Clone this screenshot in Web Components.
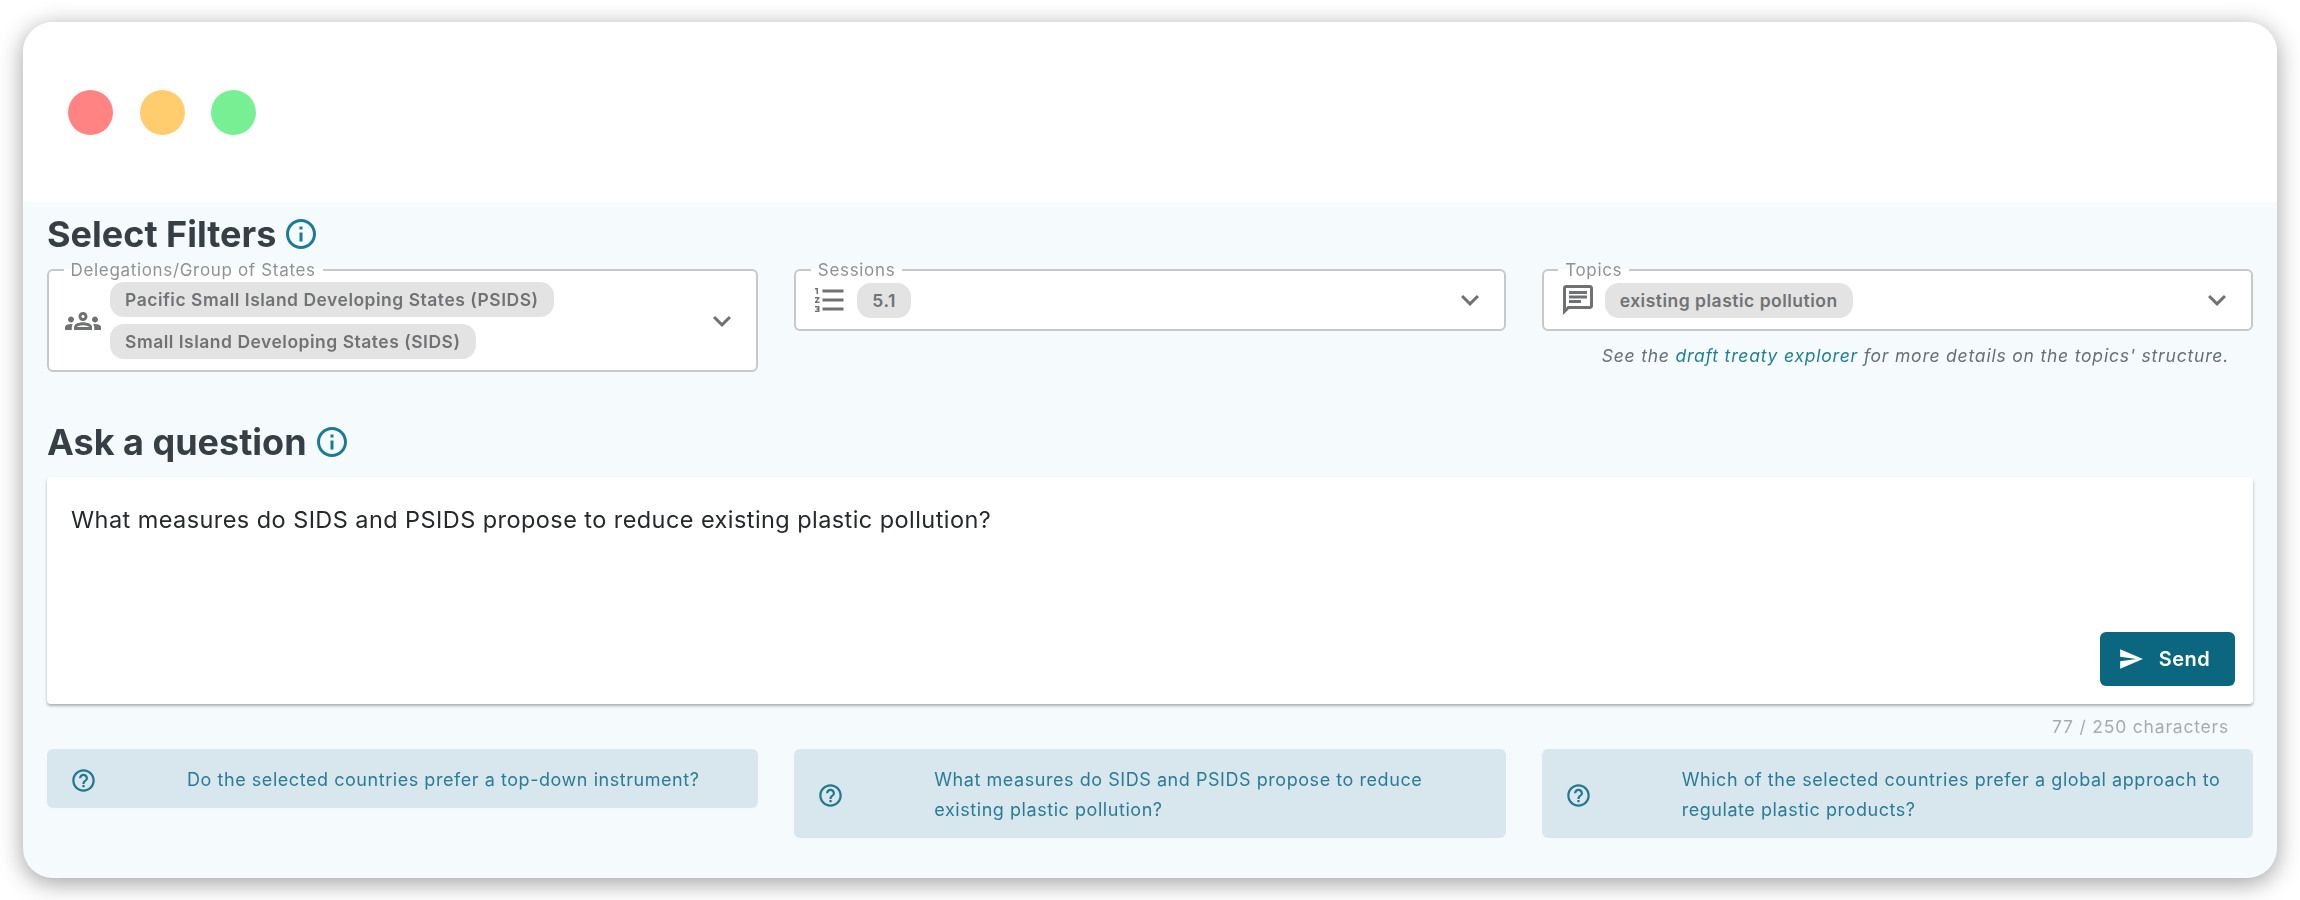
<!DOCTYPE html>
<html lang="en">
<head>
<meta charset="utf-8">
<title>Select Filters</title>
<style>
  html, body { margin: 0; background: #fff; }
  body { font-family: Inter, "Liberation Sans", sans-serif; padding: 22px 23px; box-sizing: border-box; height: 900px; overflow: hidden; }
</style>
</head>
<body>
<app-window>
  <section-title text="Select Filters"></section-title>
  <div slot="filters">
    <filter-select label="Delegations/Group of States" icon="groups">
      <filter-chip>Pacific Small Island Developing States (PSIDS)</filter-chip>
      <filter-chip>Small Island Developing States (SIDS)</filter-chip>
    </filter-select>
    <filter-select label="Sessions" icon="list">
      <filter-chip>5.1</filter-chip>
    </filter-select>
    <filter-select label="Topics" icon="chat" hint>
      <filter-chip>existing plastic pollution</filter-chip>
    </filter-select>
  </div>
  <section-title slot="ask" text="Ask a question" class="second"></section-title>
  <question-box slot="ask" count="77 / 250 characters">What measures do SIDS and PSIDS propose to reduce existing plastic pollution?</question-box>
  <div slot="suggestions">
    <suggestion-card>Do the selected countries prefer a top-down instrument?</suggestion-card>
    <suggestion-card>What measures do SIDS and PSIDS propose to reduce existing plastic pollution?</suggestion-card>
    <suggestion-card>Which of the selected countries prefer a global approach to regulate plastic products?</suggestion-card>
  </div>
</app-window>

<script>
// material icon paths, all on a 24 box
const ICONS = {
  info: 'M11 7h2v2h-2zm0 4h2v6h-2zm1-9C6.48 2 2 6.48 2 12s4.48 10 10 10 10-4.48 10-10S17.52 2 12 2zm0 18c-4.41 0-8-3.59-8-8s3.59-8 8-8 8 3.59 8 8-3.59 8-8 8z',
  help: 'M11 18h2v-2h-2v2zm1-16C6.48 2 2 6.48 2 12s4.48 10 10 10 10-4.48 10-10S17.52 2 12 2zm0 18c-4.41 0-8-3.59-8-8s3.59-8 8-8 8 3.59 8 8-3.59 8-8 8zm0-14c-2.21 0-4 1.79-4 4h2c0-1.1.9-2 2-2s2 .9 2 2c0 2-3 1.75-3 5h2c0-2.25 3-2.5 3-5 0-2.21-1.79-4-4-4z',
  chevron: 'M16.59 8.59L12 13.17 7.41 8.59 6 10l6 6 6-6z',
  send: 'M2.01 21L23 12 2.01 3 2 10l15 2-15 2z',
  list: 'M2 17h2v.5H3v1h1v.5H2v1h3v-4H2v1zm1-9h1V4H2v1h1v3zm-1 3h1.8L2 13.1v.9h3v-1H3.2L5 10.9V10H2v1zm5-6v2h14V5H7zm0 14h14v-2H7v2zm0-6h14v-2H7v2z',
  chat: 'M4 4h16v12H5.17L4 17.17V4m0-2c-1.1 0-1.99.9-1.99 2L2 22l4-4h14c1.1 0 2-.9 2-2V4c0-1.1-.9-2-2-2H4zm2 10h8v2H6v-2zm0-3h12v2H6V9zm0-3h12v2H6V6z',
  groups: 'M4,13c1.1,0,2-0.9,2-2c0-1.1-0.9-2-2-2s-2,0.9-2,2C2,12.1,2.9,13,4,13z M5.13,14.1C4.76,14.04,4.39,14,4,14c-0.99,0-1.93,0.21-2.78,0.58C0.48,14.9,0,15.62,0,16.43V18l4.5,0v-1.61C4.5,15.56,4.73,14.78,5.13,14.1z M20,13c1.1,0,2-0.9,2-2c0-1.1-0.9-2-2-2s-2,0.9-2,2C18,12.1,18.9,13,20,13z M24,16.43c0-0.81-0.48-1.53-1.22-1.85C21.93,14.21,20.99,14,20,14c-0.39,0-0.76,0.04-1.13,0.1c0.4,0.68,0.63,1.46,0.63,2.29V18l4.5,0V16.43z M16.24,13.65c-1.17-0.52-2.61-0.9-4.24-0.9c-1.63,0-3.07,0.39-4.24,0.9C6.68,14.13,6,15.21,6,16.39V18h12v-1.61C18,15.21,17.32,14.13,16.24,13.65z M8.07,16c0.09-0.23,0.13-0.39,0.91-0.69c0.97-0.38,1.99-0.56,3.02-0.56s2.05,0.18,3.02,0.56c0.77,0.3,0.81,0.46,0.91,0.69H8.07z M12,8c0.55,0,1,0.45,1,1s-0.45,1-1,1s-1-0.45-1-1S11.45,8,12,8 M12,6c-1.66,0-3,1.34-3,3c0,1.66,1.34,3,3,3s3-1.34,3-3C15,7.34,13.66,6,12,6L12,6z'
};

function icon(name, size, color) {
  return `<svg width="${size}" height="${size}" viewBox="0 0 24 24" fill="${color}" style="flex:none;display:block" aria-hidden="true"><path d="${ICONS[name]}"/></svg>`;
}

class AppWindow extends HTMLElement {
  constructor() {
    super();
    this.attachShadow({ mode: 'open' });
    this.shadowRoot.innerHTML = `
      <style>
        :host {
          display: block;
          width: 2254px;
          height: 856px;
          border-radius: 30px;
          background: #f5fafd;
          box-shadow: 0 5px 24px rgba(0, 0, 0, 0.38);
        }
        .frame { height: 100%; border-radius: inherit; overflow: hidden; }
        .bar {
          height: 180px;
          background: #fff;
          display: flex;
          align-items: center;
          gap: 26.5px;
          padding-left: 45px;
        }
        .dot { width: 45px; height: 45px; border-radius: 50%; }
        /* the reference is a slightly soft upscaled capture */
        .content { padding: 11px 24px 0; filter: blur(0.45px); }
        ::slotted([slot="filters"]) {
          display: grid;
          grid-template-columns: repeat(3, 1fr);
          gap: 36px;
          align-items: start;
          margin-top: 5px;
        }
        ::slotted([slot="suggestions"]) {
          display: grid;
          grid-template-columns: repeat(3, 1fr);
          gap: 36px;
          align-items: start;
          margin-top: 12px;
        }
      </style>
      <div class="frame">
        <div class="bar">
          <span class="dot" style="background:#ff8383"></span>
          <span class="dot" style="background:#ffcc6e"></span>
          <span class="dot" style="background:#77ef93"></span>
        </div>
        <div class="content">
          <slot></slot>
          <slot name="filters"></slot>
          <slot name="ask"></slot>
          <slot name="suggestions"></slot>
        </div>
      </div>`;
  }
}

class SectionTitle extends HTMLElement {
  constructor() {
    super();
    this.attachShadow({ mode: 'open' });
  }
  connectedCallback() {
    this.shadowRoot.innerHTML = `
      <style>
        :host { display: block; }
        :host(.second) { margin: 49px 0 14px; }
        h2 {
          margin: 0;
          height: 42px;
          display: flex;
          align-items: center;
          gap: 7px;
          font: 700 36px/42px Inter, sans-serif;
          color: #353f45;
        }
      </style>
      <h2>${this.getAttribute('text')}${icon('info', 36, '#1a7b96')}</h2>`;
  }
}

class FilterSelect extends HTMLElement {
  constructor() {
    super();
    this.attachShadow({ mode: 'open' });
  }
  connectedCallback() {
    const hint = this.hasAttribute('hint')
      ? `<p class="hint">See the <a>draft treaty explorer</a> for more details on the topics' structure.</p>`
      : '';
    this.shadowRoot.innerHTML = `
      <style>
        :host { display: block; }
        fieldset {
          margin: 0;
          padding: 2px 16px 11px;
          min-width: 0;
          background: #fff;
          border: 2px solid #c6c8c9;
          border-radius: 6px;
          display: block;
        }
        legend {
          margin-left: -1.5px;
          padding: 0 7px;
          font: 400 17px/20px Inter, sans-serif;
          color: #8f9193;
          letter-spacing: 0.67px;
        }
        .row { display: flex; align-items: center; }
        .chips { flex: 1; display: flex; flex-direction: column; align-items: flex-start; gap: 7px; margin-left: 9px; }
        .hint {
          margin: 15px 24px 0 0;
          text-align: right;
          font: italic 400 17.5px/20px Inter, sans-serif;
          letter-spacing: 0.8px;
          color: #667075;
        }
        .hint a { color: #1f7f99; }
      </style>
      <fieldset>
        <legend>${this.getAttribute('label')}</legend>
        <div class="row">
          ${icon(this.getAttribute('icon'), 36, '#6f7173')}
          <div class="chips"><slot></slot></div>
          ${icon('chevron', 36, '#6f7173')}
        </div>
      </fieldset>
      ${hint}`;
  }
}

class FilterChip extends HTMLElement {
  constructor() {
    super();
    this.attachShadow({ mode: 'open' });
    this.shadowRoot.innerHTML = `
      <style>
        :host {
          display: inline-block;
          height: 35px;
          padding: 0 15px;
          box-sizing: border-box;
          background: #e3e3e3;
          border-radius: 14px;
          font: 600 17.5px/35px Inter, sans-serif;
          letter-spacing: 0.5px;
          color: #707274;
          white-space: nowrap;
        }
      </style>
      <slot></slot>`;
  }
}

class QuestionBox extends HTMLElement {
  constructor() {
    super();
    this.attachShadow({ mode: 'open' });
  }
  connectedCallback() {
    this.shadowRoot.innerHTML = `
      <style>
        :host { display: block; }
        .box {
          height: 227px;
          box-sizing: border-box;
          padding: 28px 18px 18px 24px;
          background: #fff;
          border-radius: 4px;
          box-shadow: 0 2px 3px rgba(0, 0, 0, 0.3);
          display: flex;
          flex-direction: column;
          justify-content: space-between;
        }
        .text { font: 400 23.5px/30px Inter, sans-serif; color: #26292b; letter-spacing: 0.43px; }
        button {
          align-self: flex-end;
          width: 135px;
          height: 54px;
          padding: 0 7px 0 0;
          border: 0;
          border-radius: 6px;
          background: #0b6680;
          color: #fff;
          display: flex;
          align-items: center;
          justify-content: center;
          gap: 15px;
          font: 600 20px/24px Inter, sans-serif;
          letter-spacing: 0.5px;
        }
        .count {
          margin: 13px 24px 0 0;
          text-align: right;
          font: 400 17.5px/20px Inter, sans-serif;
          letter-spacing: 0.8px;
          color: #a9abad;
        }
      </style>
      <div class="box">
        <div class="text"><slot></slot></div>
        <button>${icon('send', 26, '#fff')}Send</button>
      </div>
      <div class="count">${this.getAttribute('count')}</div>`;
  }
}

class SuggestionCard extends HTMLElement {
  constructor() {
    super();
    this.attachShadow({ mode: 'open' });
    this.shadowRoot.innerHTML = `
      <style>
        :host {
          display: flex;
          align-items: center;
          box-sizing: border-box;
          padding: 16px 30px 13px 23px;
          background: #d8e6ed;
          border-radius: 6px;
          font: 400 18px/30px Inter, sans-serif;
          letter-spacing: 0.55px;
          color: #2a7c95;
        }
        .text { margin-left: 90px; }
      </style>
      ${icon('help', 27, '#23788f')}
      <div class="text"><slot></slot></div>`;
  }
}

customElements.define('app-window', AppWindow);
customElements.define('section-title', SectionTitle);
customElements.define('filter-select', FilterSelect);
customElements.define('filter-chip', FilterChip);
customElements.define('question-box', QuestionBox);
customElements.define('suggestion-card', SuggestionCard);
</script>
</body>
</html>
